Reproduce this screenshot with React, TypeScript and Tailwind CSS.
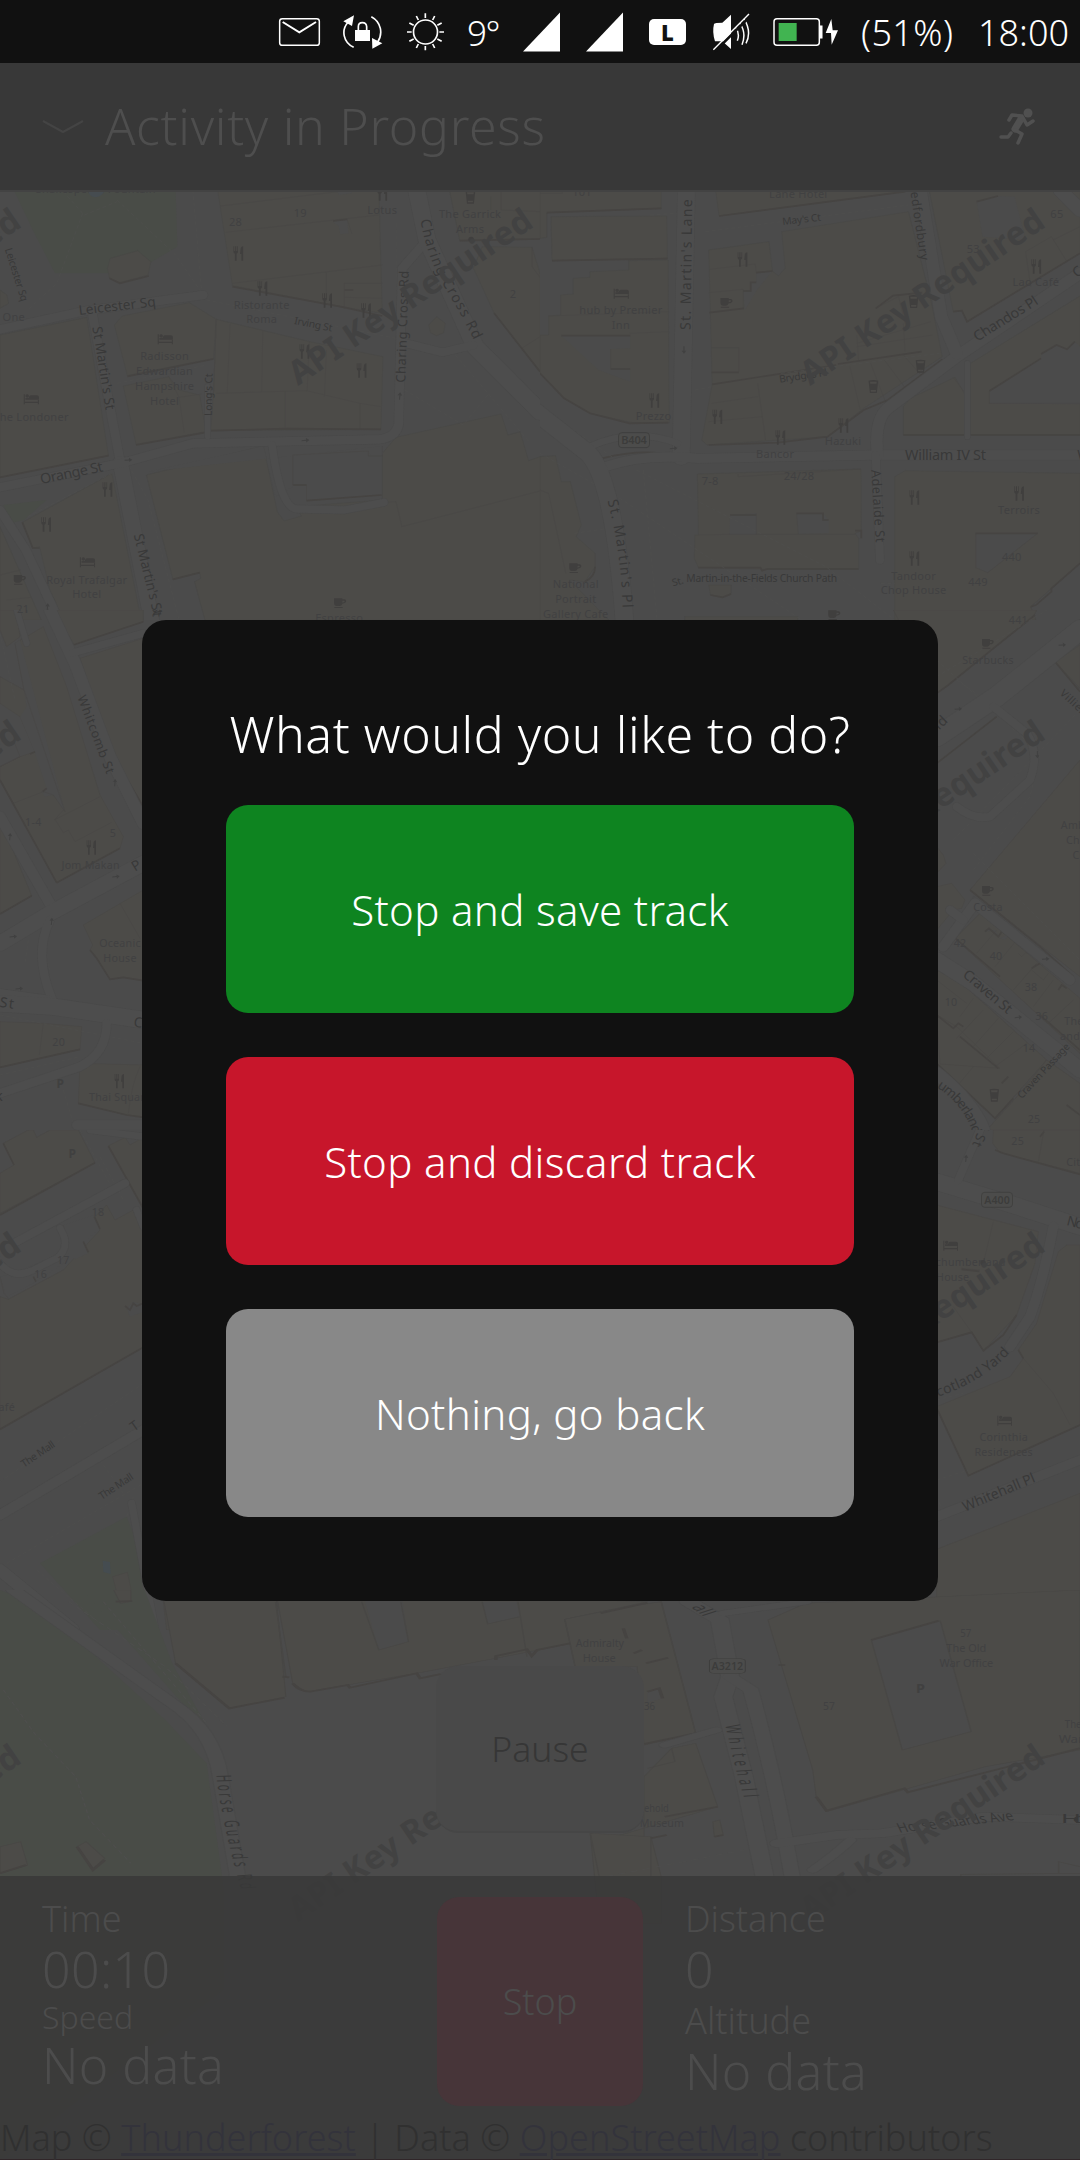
import React from "react";

type Street = [path: string, text: string, size: number, len: number];
type Poi = [x: number, y: number, ...lines: string[]];
type Mark = [kind: string, x: number, y: number];
type TileData = {
  id: string;
  x: number;
  y: number;
  w: number;
  h: number;
  vw: number;
  vh: number;
  parks?: string[];
  buildings: string[];
  yards?: string[];
  lines?: string;
  shadows?: string;
  dashes?: string;
  roads: [string, number][];
  streets: Street[];
  pois: Poi[];
  marks: Mark[];
  badges?: [number, number, number, string][];
};

const tiles: TileData[] = [
  {
    id: "nw", x: 0, y: 190, w: 540, h: 430, vw: 1568, vh: 1290,
    parks: ["40,0 510,0 515,170 400,240 330,250 160,250 100,130", "10,945 135,930 70,990 30,1000"],
    buildings: [
      "312,235 320,205 400,182 438,215 430,255 348,278 318,265",
      "632,0 1100,0 1110,370 1000,352 675,287",
      "332,405 355,378 550,338 628,388 620,505 370,557",
      "358,588 490,560 520,600 580,615 598,725 395,763",
      "628,388 900,455 1112,500 1106,718 612,722 620,610",
      "0,435 252,382 315,797 0,862",
      "1305,0 1568,0 1568,147 1335,152",
      "1375,235 1400,170 1545,172 1568,250 1568,545 1435,370",
      "425,855 765,768 805,965 825,993 875,978 860,950 1110,930 1110,790 1150,742 1455,672 1475,735 1510,725 1535,812 1568,800 1568,1290 595,1290 565,1175 583,1165 580,1148 502,1168",
      "65,997 325,850 410,1290 185,1290 145,1200 115,1070 95,1075",
      "0,1010 120,1290 0,1290",
      "1245,405 1268,380 1293,400 1288,428 1268,437 1250,428",
      "0,300 20,315 25,340 0,355",
    ],
    yards: ["975,0 1022,0 1022,10 985,15", "967,95 1008,88 1012,130 988,133 983,108", "430,845 765,768 800,920 850,890 850,795 1070,783 1080,798 1112,795 1112,768"],
    lines: "M640,48L1020,0M655,127L1100,75M1008,88L1022,132M675,280L1110,225M948,248V335M1000,357V280H1110M1000,322L1110,325M668,402L660,608M763,420L760,605M628,610L890,602 1045,640 1106,650M828,605V712M898,455L892,602M948,480L942,620M1045,640V715M490,560L520,622 585,612M520,622L535,728M628,388L620,610M850,795V885H890V930M850,795L1070,783V798H1110V768M1120,937L1150,935 1167,1010 1568,903M1545,172V230L1568,262M1515,475L1568,440M1425,20V60M1455,0V60L1568,65M0,1155L60,1140M20,1230L90,1222",
    shadows: "M675,290L1000,352 1110,378M370,559L620,507M395,765L598,727M612,722L830,716 1106,718M0,862L315,797M1335,152L1568,147M1435,370L1568,545M890,932L1108,915M502,1168L580,1148M318,265L348,280 432,258M967,93L1008,88M852,885H890M65,997L95,1074H115M1000,300H1026",
    dashes: "M240,70L165,280 80,360M240,70L180,0M340,30L510,195 600,330 1150,445M245,75L340,35M560,0L585,300M1150,100V420M1175,600L1345,705 1420,610M365,810L430,930 520,1290M1310,480L1540,760M80,980L325,850M340,580L600,525",
    roads: [["M0,418L250,362 590,315", 26], ["M268,370L350,820", 26], ["M350,820L440,1290", 44], ["M0,892L350,820 560,760 1100,748Q1160,740 1158,690L1168,235 1240,150", 26], ["M1210,0L1240,150 1380,470 1568,665", 50], ["M1180,460L1285,487 1375,465", 24], ["M790,765Q815,960 865,957L1000,960 1115,937", 22], ["M0,960L75,1080 170,1290", 26], ["M603,590V740", 16]],
    streets: [
      ["M230,375L455,348", "Leicester Sq", 40, 225],
      ["M268,412L308,665", "St Martin's St", 40, 252],
      ["M120,882L303,843", "Orange St", 42, 185],
      ["M388,1035L447,1280", "St Martin's St", 40, 250],
      ["M1177,578L1187,243", "Charing Cross Rd", 38, 335],
      ["M1220,90Q1245,215 1290,290T1382,462", "Charing Cross Rd", 42, 395],
      ["M853,402L962,424", "Irving St", 30, 112],
      ["M615,678L617,550", "Long's Ct", 30, 127],
      ["M14,178L62,335", "Leicester Sq", 30, 165],
    ],
    pois: [[278, 10, "Shakespeare Fountain"], [684, 108, "28"], [872, 80, "19"], [1110, 71, "Lotus"], [1365, 85, "The Garrick", "Arms"], [760, 356, "Ristorante", "Roma"], [478, 511, "Radisson", "Edwardian", "Hampshire", "Hotel"], [90, 692, "The Londoner"], [252, 1181, "Royal Trafalgar", "Hotel"], [40, 394, "One"], [1490, 323, "2"], [66, 1268, "21"], [985, 1296, "Espresso"]],
    marks: [["f", 1110, 10], ["f", 692, 190], ["f", 762, 295], ["f", 950, 331], ["f", 1063, 361], ["f", 884, 484], ["f", 1050, 541], ["f", 312, 898], ["f", 134, 1003], ["b", 480, 448], ["b", 91, 628], ["b", 254, 1117], ["c", 57, 1168], ["c", 987, 1238], ["g", 1366, 22], ["r", 373, 810], ["r", 887, 751], ["u", 1161, 618], ["u", 138, 1251], ["d", 1368, 148]],
  },
  {
    id: "ne", x: 540, y: 190, w: 540, h: 430, vw: 1568, vh: 1290,
    buildings: [
      "0,0 352,0 352,55 20,68 20,142 0,145",
      "32,80 368,78 370,205 35,212",
      "60,315 97,312 97,265 145,262 145,245 258,240 258,212 372,210 375,698 270,698 145,670 70,625 0,550 0,435 25,435 25,378 60,375",
      "510,0 1060,0 1060,5 520,78",
      "490,180 665,155 675,243 692,258 712,235 702,125 1070,65 1135,330 1168,500 940,655 835,740 485,765 470,750 500,583",
      "1130,0 1568,0 1568,190 1240,395 1225,362 1200,365",
      "1250,520 1568,318 1568,735 1250,735",
      "1055,735 1055,650 1075,625 1205,562 1233,612 1233,735",
      "1030,860 1060,842 1568,850 1568,1120 1425,1250 1440,1290 1030,1290",
      "457,852 932,837 933,1022 915,1030 925,1045 925,1137 640,1137 460,1133 448,1105 450,1035 460,1035",
      "0,800 45,797 62,875 88,875 120,1005 105,1040 160,1090 160,1130 130,1175 85,1170 200,1290 0,1290",
      "420,1290 420,1280 748,1280 748,1290",
      "490,1185 555,1185 555,1210 530,1222 495,1215",
    ],
    yards: ["62,437 262,437 262,475 205,477 205,535 262,537 262,575 170,540", "1305,603 1455,505 1455,492 1500,465 1530,478 1553,455 1568,470 1568,643 1305,640", "1268,35 1330,18 1378,20 1410,150 1285,140", "552,975 628,970 628,1033 550,1033", "745,970 822,970 838,990 838,1030 750,1032", "1265,1030 1445,1030 1300,1148 1267,1133", "628,250 675,243 630,300 595,360 590,305 612,300 612,277 628,275"],
    lines: "M492,238L625,222 628,250M490,308L590,298V355M25,378L375,365M260,430L375,425M498,473H577V545M498,640L632,620M490,695L645,680M632,580L655,750M920,460L1135,395M920,435L925,510M1055,400L1060,485M1040,315L1060,400M920,470L1140,435M900,530L930,660M960,520L1005,640M1000,510L1065,600M1055,495L1110,560M975,355L1040,320M628,970V1033M745,970L750,1032M550,1033H915M460,1035L550,1033M1410,185L1485,140 1530,215M1410,185L1425,290M1490,150L1568,110M1305,603V640H1568M0,900L25,910 75,1150M575,852V860L932,837M1265,1030V1133L1300,1148 1445,1030M205,477V535M0,10H65V0M1200,562L1235,610",
    shadows: "M20,68L352,55M35,212L370,206M62,437H262M205,537H262M0,550L70,625 145,670 260,700 372,698M520,78L1060,5M498,547H577M500,583L860,525M865,522L1108,485M490,765L690,758 835,740 940,660 1010,630 1168,508M1200,365L1225,362 1240,395 1568,190M1055,735H1233M1250,735H1568M1305,603L1455,505M1455,492L1500,465 1530,478 1553,455M552,975H628M745,970H822V990H838M460,1133H640L645,1142 660,1137H925M915,1022H933V1045M1265,1030H1445M1425,1250L1440,1245 1485,1205V1195L1568,1120M975,355L1025,317 1110,308M492,368L592,355M590,303H612V277H628M628,248L675,243M1268,35L1330,18M495,1215L530,1222 555,1212M180,805Q280,780 350,790M130,1175Q160,1160 160,1130",
    dashes: "M0,650L250,830M0,790L240,930 760,1290M280,840L830,1130 1030,1290M480,125L1070,45M450,600L500,590M700,550L1160,490M320,75L400,70M300,840L340,1290M100,1030L230,1010M990,1180H1030",
    roads: [["M425,0L410,800", 50], ["M190,830Q300,790 460,805L980,795 1568,795", 28], ["M145,770Q270,710 400,760", 20], ["M-20,660L140,790Q215,870 245,1290", 52], ["M980,795Q970,690 1010,655L1210,500 1568,250", 34], ["M1105,0L1165,380 1210,490", 36], ["M975,795L987,1110", 24], ["M1241,520V740", 16], ["M1510,0L1568,60", 40]],
    streets: [
      ["M437,420L442,28", "St. Martin's Lane", 42, 392],
      ["M196,932Q235,1080 240,1252", "St. Martin's Pl", 42, 325],
      ["M962,840L975,1058", "Adelaide St", 38, 218],
      ["M1060,811H1297", "William IV St", 42, 235],
      ["M1560,811H1600", "W", 42, 36],
      ["M1270,455L1450,340", "Chandos Pl", 42, 213],
      ["M1560,265L1590,240", "C", 42, 30],
      ["M705,105L817,92", "May's Ct", 30, 112],
      ["M696,578L835,557", "Brydges Pl", 30, 140],
      ["M1072,-18L1105,212", "Bedfordbury", 36, 232],
      ["M386,1189L420,1180", "St.", 30, 34],
      ["M425,1177H863", "Martin-in-the-Fields Church Path", 30, 438],
    ],
    pois: [[122, 18, "101"], [750, 24, "Lane Hotel"], [235, 373, "hub by Premier", "Inn"], [330, 689, "Prezzo"], [683, 803, "Bancor"], [880, 764, "Hazuki"], [752, 870, "24/28"], [494, 885, "7-8"], [1440, 289, "Lao Café"], [1501, 84, "65"], [1258, 188, "53"], [1391, 971, "Terroirs"], [1085, 1169, "Tandoor", "Chop House"], [1370, 1113, "440"], [1272, 1188, "449"], [104, 1194, "National", "Portrait", "Gallery Cafe"], [1390, 1296, "441"]],
    marks: [["b", 236, 311], ["f", 588, 208], ["c", 541, 337], ["f", 332, 631], ["f", 515, 680], ["f", 698, 742], ["f", 881, 706], ["g", 1085, 335], ["g", 1105, 529], ["g", 968, 590], ["f", 1441, 229], ["f", 1391, 910], ["f", 1087, 922], ["f", 1087, 1105], ["c", 102, 1133], ["c", 854, 1274], ["n", 418, 480], ["r", 388, 775]],
    badges: [[273, 751, 90, "B404"]],
  },
  {
    id: "w", x: 0, y: 610, w: 240, h: 520, vw: 720, vh: 1560,
    buildings: [
      "45,100 130,50 200,230 300,555 370,680 360,715 170,818 40,580 0,510 0,470 60,440 105,425 60,320 0,280 0,200 72,240",
      "160,0 430,0 430,35 222,104", "240,145 430,85 430,590 335,430", "0,0 50,0 60,80 20,110 0,60",
      "0,625 95,857 0,912", "250,945 430,840 430,1112 370,1102 330,1108 290,1045 270,1020 278,1005",
      "0,1235 130,1240 245,1250 240,1318 0,1372", "240,1360 430,1365 430,1520 380,1515 235,1480",
    ],
    yards: ["72,240 45,100 60,90 195,605 160,555 135,560 125,545 140,535 105,430 60,320 80,290"],
    lines: "M45,100L72,240 195,605M163,630L300,560M190,600L165,628 190,668 205,660 225,695 335,637M40,580L130,545 160,555 195,605M0,470L60,440M130,1240L118,1335M360,880L420,985M385,1510Q395,1420 420,1370M60,440L40,390",
    shadows: "M222,104L430,35M170,818L360,715M0,912L95,857M0,1372L240,1318M235,1480L380,1515 430,1522M335,430L430,590M270,1020L290,1045 330,1108 370,1102 430,1112M105,425L90,432M0,510L170,818M140,535L128,545",
    dashes: "M0,70L45,270M85,990L75,1060M130,1020L150,1080M0,1215L430,1300M190,1440L220,1540M0,1395L240,1340",
    roads: [["M150,0L225,160 330,440 430,640", 36], ["M215,130L430,70", 22], ["M0,620L155,890", 32], ["M0,1000L150,910 430,760", 46], ["M150,930Q100,1030 155,1165", 26], ["M0,1150L150,1170", 26], ["M0,1180L160,1190 430,1230", 50], ["M0,1450L240,1370Q320,1330 320,1240", 26], ["M50,0L80,100", 18], ["M230,1545H430", 28]],
    streets: [["M232,262L320,495", "Whitcomb St", 38, 248], ["M455,-45L458,24", "'s St", 38, 66], ["M405,785L430,770", "Pall Mall", 42, 180], ["M-2,1190L40,1196", "St", 42, 42], ["M400,1250L500,1262", "Cockspur", 42, 180], ["M-14,1472H10", "k", 42, 22]],
    pois: [[70, 10, "21"], [272, 776, "Jom Makan"], [100, 649, "1-4"], [339, 682, "5"], [360, 1010, "Oceanic", "House"], [176, 1307, "20"], [360, 1474, "Thai Square"]],
    marks: [["f", 274, 712], ["f", 358, 1413], ["r", 348, 800], ["r", 40, 980], ["u", 155, 934], ["r", 58, 1136], ["u", 30, 680], ["u", 345, 518], ["P", 181, 1421]],
  },
  {
    id: "sw", x: 0, y: 1130, w: 240, h: 500, vw: 720, vh: 1500,
    parks: ["120,1300 380,1160 430,1290 460,1500 300,1500", "0,1400 120,1500 0,1500", "60,1500 0,1430 0,1500"],
    buildings: [
      "10,40 85,0 100,0 110,22 150,0 235,0 285,98 0,250 0,130 42,105",
      "325,48 375,22 390,45 430,22 430,240", "0,500 25,508 190,420 300,300 285,260 320,225 345,270 400,240 430,280 430,652 0,900",
      "338,1340 382,1327 400,1410 360,1425", "490,1415 720,1415 720,1500 500,1500",
    ],
    yards: ["190,285 280,255 300,297 250,335 265,370 225,388 205,370 190,400 100,460 20,500 0,440 40,430 180,370", "380,535 400,515 430,525 430,545 390,560"],
    lines: "M190,285L205,340 180,375 35,440M0,440L12,490 25,505M400,240L430,300",
    shadows: "M0,255L285,98M10,40L42,105M325,48L430,235M0,898L430,652M300,297L283,260M265,367L250,335M375,528L390,540 400,520 410,528 430,520M360,1422L400,1408M100,440L108,455",
    dashes: "M0,1055L430,760M20,1300L430,1060M300,80L370,210M240,0L340,180M110,1320L300,1480M380,1160L400,1100M300,990L370,1090",
    roads: [["M50,335L375,160", 24], ["M0,400Q40,450 100,420L170,385Q215,350 180,295", 20], ["M0,1155L430,900", 30], ["M0,1320L220,1500", 36], ["M410,240L430,290", 20], ["M270,0L430,20", 20], ["M395,1120L465,1500", 22]],
    streets: [["M72,1013L168,948", "The Mall", 31, 115], ["M305,1110L403,1045", "The Mall", 31, 117], ["M402,905L430,885", "The Mall", 40, 160]],
    pois: [[294, 258, "18"], [190, 403, "17"], [122, 444, "16"], [10, 843, "Café"]],
    marks: [["P", 217, 70]],
  },
  {
    id: "e", x: 840, y: 610, w: 240, h: 520, vw: 720, vh: 1560,
    buildings: [
      "160,0 590,0 580,20 325,225 290,250", "645,155 720,105 720,235", "290,790 318,760 310,735 290,710", "290,830 335,820 375,870 365,895 340,900 290,960",
      "390,840 720,450 720,1100", "345,985 420,910 480,960 720,1165 720,1330", "290,1080 365,1120 620,1350 465,1525 290,1360", "290,1225 300,1220 350,1250 480,1375 300,1362",
      "440,1560 540,1450 620,1350 720,1420 720,1560",
    ],
    yards: ["435,965 445,955 480,985 510,970 495,990 480,985 465,960"],
    lines: "M465,1070L530,990M410,1030L470,960M520,1140L590,1060M580,1190L640,1110M625,1240L700,1170M360,1220L400,1165M350,1285L430,1200M400,1310L475,1225M440,1345L520,1265M465,1370L560,1300M350,1430L400,1370M290,1110L380,1180M575,1080L610,1110 625,1090M535,1030L545,1040 560,1025",
    shadows: "M325,225L460,115 585,15M290,250L325,225M645,155L720,245M390,840L600,1010 700,1100M435,965L447,955 475,980 485,965M340,980L480,1100M600,1215L720,1320M290,1215L340,1255 355,1240 370,1250M360,1280L475,1375M290,1360L465,1525 520,1465M575,1075L600,1060M655,1140L665,1125 680,1135M290,460L470,320M430,265L720,30M485,1420L505,1400M680,1485L720,1515",
    dashes: "M290,150L600,430 570,560 400,780M340,690L720,300M350,210L480,300M400,730L720,1050M480,300L600,400M290,200L720,-60",
    roads: [["M290,380L470,260 720,60", 60], ["M460,290L560,370Q600,430 570,510L450,620Q400,630 350,590", 24], ["M310,1010L405,880 690,1110", 30], ["M290,1050L400,1120 720,1380", 46], ["M290,1390Q400,1480 430,1560", 40], ["M330,900L370,930", 26]],
    streets: [["M268,390L330,330", "and", 42, 80], ["M658,252L725,315", "Villiers St", 32, 150], ["M366,1098L504,1215", "Craven St", 42, 178], ["M545,1468L692,1310", "Craven Passage", 30, 214], ["M290,1432Q380,1490 402,1585", "umberland St", 40, 220]],
    pois: [[535, 41, "441"], [444, 163, "Starbucks"], [444, 904, "Costa"], [708, 658, "Amba", "Cha", "C"], [360, 1010, "42"], [468, 1050, "40"], [573, 1142, "38"], [605, 1230, "36"], [333, 1189, "10"], [567, 1325, "14"], [702, 1246, "The"], [690, 1290, "and"], [582, 1538, "25"]],
    marks: [["c", 443, 100], ["c", 443, 841], ["g", 463, 1456], ["r", 355, 297], ["r", 667, 105], ["n", 592, 434], ["r", 535, 1222], ["r", 617, 1047]],
  },
  {
    id: "se", x: 840, y: 1130, w: 240, h: 500, vw: 720, vh: 1500,
    buildings: [
      "460,0 720,0 720,130 480,68 458,40", "290,225 595,305 585,400 530,555 430,662 395,607 290,637", "655,365 680,345 720,345 720,885 385,1037 290,830 510,740 550,685 535,660 590,580", "290,1258 720,1090 720,1500 290,1500",
    ],
    yards: ["180,1500 295,1470 305,1500"],
    lines: "M460,275L430,400M365,415L420,420M550,685L640,790 690,885M612,0L595,95M340,530L395,607",
    shadows: "M465,60L490,70 720,133M290,637L395,607 430,662 490,615 530,555M290,835L385,1037 720,885M365,418L418,424M535,660L550,685M600,20L612,5M180,1500L295,1470",
    dashes: "M290,1050L385,1020M290,1100L310,1145M290,810L370,790",
    roads: [["M290,155L520,225 720,290", 50], ["M640,290Q610,450 570,560L510,650", 30], ["M355,150L420,0", 24], ["M290,1160L720,990", 28]],
    streets: [["M427,-30L392,55", "d St", 40, 80], ["M678,285L730,298", "No", 42, 52], ["M294,800Q430,755 512,665", "cotland Yard", 42, 255], ["M375,1145L590,1054", "Whitehall Pl", 42, 232]],
    pois: [[533, 45, "25"], [700, 108, "Cit"], [392, 409, "chumberland"], [338, 453, "House"], [491, 934, "Corinthia", "Residences"]],
    marks: [["b", 332, 347], ["b", 494, 872], ["u", 378, 85], ["d", 429, 398]],
    badges: [[471, 210, 93, "A400"]],
  },
  {
    id: "s", x: 0, y: 1590, w: 1080, h: 570, vw: 1568, vh: 1710,
    parks: ["0,0 60,50 240,390 300,520 325,900 325,1200 0,1710", "120,0 210,0 250,220 300,410 290,400"],
    buildings: [
      "235,0 400,0 415,320 333,355 255,220", "400,0 940,35 820,88 830,160 720,205 605,250 445,305 425,280", "820,88 910,50 960,35 1010,430 935,465 925,230 835,230",
      "1115,90 1170,40 1568,0 1568,480 1430,530 1200,665 1185,620 1180,540", "935,560 975,475 1010,460 1042,650 860,760 935,740", "857,730 945,740 960,860 960,1000 870,1000", "1035,695 1045,690 1050,735 1037,740",
      "0,770 30,755 40,825 0,850", "112,770 125,755 152,805 135,835", "165,0 190,0 190,35 175,40",
    ],
    yards: ["1265,150 1365,92 1410,425 1310,480", "525,0 582,0 593,155 550,180", "700,35 750,35 755,80 708,102", "940,305 955,295 962,325 940,338"],
    lines: "M400,35L415,260M752,35L765,200M820,88L835,230M525,35L550,180 593,155 582,35M700,35L708,102 755,80M1265,150L1310,480 1410,425 1365,92M975,475L980,515 940,535M960,35L1010,430M945,740V860M857,730L870,860M1537,850V815L1568,830M1395,860V853L1568,850",
    shadows: "M255,220L333,355 413,323M410,260L420,262M425,280Q435,305 450,305L505,285 508,293 605,250 610,265 640,252M720,210V198L765,178 772,198 780,180 828,160M872,70L940,38M1265,150L1363,92M1130,225H1140M1185,620L1200,662 1313,595 1318,607 1568,475M935,462L1010,430M965,680L1042,650M905,115L910,145M920,190L932,180M938,220L970,203M1037,740L1050,735M0,850L38,825M112,770L135,840 152,810M168,35L192,33M940,305L957,295 962,325M945,745L968,735",
    dashes: "M5,300L50,430 110,560 130,690 190,820M100,35L240,230 330,410M150,35L300,400M880,860L1080,780",
    roads: [["M20,0L250,340Q310,420 320,560L345,860", 22], ["M1000,35L1045,90 1060,260 1050,320 1080,560 1110,860", 26], ["M1060,260L1090,300Q1125,560 1150,860", 22], ["M1040,420L965,465", 16], ["M1130,760L1215,735 1280,730 1430,680 1568,690", 24], ["M1180,840Q1215,790 1235,750", 16], ["M1170,35L1050,70", 16]],
    streets: [["M314,555Q322,700 350,900", "Horse Guards Rd", 30, 345], ["M1053,405Q1065,520 1080,622", "Whitehall", 30, 219], ["M1540,700H1600", "Horse", 40, 60], ["M1003,52L1022,80", "all", 32, 34]],
    pois: [],
    marks: [["P2", 1336, 295]],
  },
];

/* Narrow labels of the southern tile: x, y, width, text. */
const southLabels: [number, number, number, string][] = [
  [836, 170, 70, "Admiralty"], [846, 215, 48, "House"], [1394, 142, 16, "57"], [1374, 186, 58, "The Old"], [1364, 230, 78, "War Office"],
  [1195, 360, 17, "57"], [935, 361, 16, "36"], [935, 665, 36, "ehold"], [929, 710, 64, "Museum"], [1546, 415, 24, "The"], [1537, 460, 36, "War"],
];

function MarkIcon({ kind, x, y }: { kind: string; x: number; y: number }) {
  const t = `translate(${x} ${y})`;
  const c = "#403f3e";
  switch (kind) {
    case "f":
      return <path transform={t} fill={c} d="M-14,-21h2v14h3v-14h3v14h3v-14h2v17q0,4 -4,5v21h-5v-21q-4,-1 -4,-5zM7,-16q2,-5 7,-5v43h-5v-20h-4z" />;
    case "b":
      return <path transform={t} fill={c} d="M-22,-15h3v22h38v-5h3v13h-3v-4h-38v4h-3zM-17,1v-5h9q2,-7 6,-8h18q6,0 6,5v8zM-12,-15a5,5 0 1 1 -.1,0z" />;
    case "c":
      return <path transform={t} fill={c} fillRule="evenodd" d="M-17,-13h24v3h6q5,0 5,5q0,7 -11,8q-2,7 -8,7h-8q-8,0 -8,-9zM7,-6v6q7,-1 7,-4q0,-2 -3,-2zM-16,13h24v3h-24z" />;
    case "g":
      return <path transform={t} fill={c} fillRule="evenodd" d="M-14,-18q14,-4 28,0l-4,37h-20zM-10,-15l1,6h18l1,-6zM-8,10l1,5h14l1,-5z" />;
    case "d":
      return <circle cx={x} cy={y} r="8" fill={c} />;
    case "P":
      return <text x={x} y={y + 13} textAnchor="middle" fontSize="36" fontWeight="700" fill="#404040">P</text>;
    case "P2":
      return <text x={x - 6} y={y + 13} fontSize="36" fontWeight="700" textLength="13" lengthAdjust="spacingAndGlyphs" fill="#404040">P</text>;
    default: {
      const a = kind === "u" ? -85 : kind === "n" ? 90 : -5;
      return <path transform={`${t} rotate(${a})`} fill="#414141" d="M-11,-1.5h13v-5l9,6.5l-9,6.5v-5h-13z" />;
    }
  }
}

function Tile({ t }: { t: TileData }) {
  return (
    <svg x={t.x} y={t.y} width={t.w} height={t.h} viewBox={`0 0 ${t.vw} ${t.vh}`} preserveAspectRatio="none">
      {t.parks?.map((p, i) => <polygon key={i} points={p} fill="#494c47" />)}
      {t.buildings.map((p, i) => <polygon key={i} points={p} fill="#4c4b48" stroke="#484745" strokeWidth="1.5" />)}
      {t.yards?.map((p, i) => <polygon key={i} points={p} fill="#4b4b4b" />)}
      <path d={t.lines} fill="none" stroke="#484745" strokeWidth="2" />
      <path d={t.shadows} fill="none" stroke="#464442" strokeWidth="5" />
      <path d={t.dashes} fill="none" stroke="#4e4e4d" strokeWidth="2" strokeDasharray="11 8" />
      {t.roads.map(([d, w], i) => <path key={i} d={d} fill="none" stroke="#494949" strokeWidth={w + 3} strokeLinecap="round" />)}
      {t.roads.map(([d, w], i) => <path key={i} d={d} fill="none" stroke="#4d4d4d" strokeWidth={w} strokeLinecap="round" strokeLinejoin="round" />)}
      {t.marks.map(([k, x, y], i) => <MarkIcon key={i} kind={k} x={x} y={y} />)}
      {t.pois.map(([x, y, ...ls], i) =>
        ls.map((l, j) => (
          <text key={`${i}-${j}`} x={x} y={y + j * 44.5} textAnchor="middle" fontSize="32" fontWeight="400" letterSpacing="0.8" fill="#414142">{l}</text>
        )),
      )}
      {t.streets.map(([d, text, size, len], i) => (
        <React.Fragment key={i}>
          <path id={`${t.id}${i}`} d={d} fill="none" />
          <text fontSize={size} fontWeight="400" fill="#393939" textLength={len}>
            <textPath href={`#${t.id}${i}`} textLength={len}>{text}</textPath>
          </text>
        </React.Fragment>
      ))}
      {t.badges?.map(([x, y, w, text], i) => (
        <g key={i}>
          <rect x={x - w / 2} y={y - 23} width={w} height={45} rx="10" fill="#4c4c4b" stroke="#3e3e3d" strokeWidth="2.5" />
          <text x={x - w / 2 + 8} y={y + 12} fontSize="32" fontWeight="600" textLength={w - 16} fill="#3c3c3b">{text}</text>
        </g>
      ))}
      {t.id === "s" && (
        <g fill="#414142" fontWeight="400">
          {southLabels.map(([x, y, w, text], i) => (
            <text key={i} x={x} y={y} fontSize="31" textLength={w} lengthAdjust="spacingAndGlyphs">{text}</text>
          ))}
          <rect x="1030" y="206" width="52" height="44" rx="7" fill="#4c4c4b" stroke="#3e3e3d" strokeWidth="1.5" />
          <text x="1033" y="240" fontSize="32" fontWeight="600" textLength="46" lengthAdjust="spacingAndGlyphs" fill="#3c3c3b">A3212</text>
          <text transform="translate(1306 728) rotate(-13)" fontSize="40" textLength="172" lengthAdjust="spacingAndGlyphs" fill="#393939">Horse Guards Ave</text>
        </g>
      )}
      {t.id === "sw" && <path d="M308,1292l22,4 2,36 -22,-6z" fill="#454c50" />}
      {t.id === "nw" && <path d="M255,0h50q-10,22 -28,22q-18,0 -22,-22z" fill="#464c50" />}
    </svg>
  );
}

function MapView() {
  return (
    <svg className="absolute inset-0" width="1080" height="2160" viewBox="0 0 1080 2160" fontFamily="'Noto Sans','Open Sans',sans-serif">
      <rect width="1080" height="2160" fill="#4b4b4b" />
      {tiles.map((t) => <Tile key={t.id} t={t} />)}
      {[386, 898, 1410, 1922].map((y) =>
        [-214, 298, 810].map((x) => (
          <text key={`${x}-${y}`} transform={`translate(${x} ${y}) rotate(-34)`} fontSize="33" fontWeight="700" textLength="286" fill="#424242">API Key Required</text>
        )),
      )}
    </svg>
  );
}

function StatusBar() {
  return (
    <div className="relative flex h-[63px] items-center bg-[#111111] pl-[277px] text-[36px] leading-none font-light text-white">
      <svg className="mr-5 shrink-0" width="45" height="63" viewBox="51 0 135 189" fill="none" stroke="#fff">
        <rect x="59" y="56" width="119" height="80" rx="8" strokeWidth="4.5" />
        <path d="M68,66L118,97 168,66" strokeWidth="6" />
      </svg>
      <svg className="mr-[22px] shrink-0" width="42" height="63" viewBox="246 0 126 189" fill="none" stroke="#fff" strokeWidth="5">
        <path d="M281,142C250,128 242,90 265,66M334,50C364,66 370,102 352,128" />
        <path d="M250,64L282,46 276,78zM336,114L367,130 337,146z" fill="#fff" stroke="none" />
        <path d="M285,90H330V123H285z" fill="#fff" stroke="none" />
        <path d="M295,90V80Q295,68 307,68T320,80V90" strokeWidth="5" />
      </svg>
      <svg className="mr-[22px] shrink-0" width="39" height="63" viewBox="438 0 117 189" fill="none" stroke="#fff" strokeWidth="5">
        <circle cx="496.500" cy="96" r="36" />
        <path d="M552,96L538,96M545,124L532,117M524,144L518,132M496,151L496,138M469,144L475,132M448,124L461,117M441,96L455,96M448,69L461,76M469,48L475,60M496,40L496,54M524,48L518,60M545,69L532,76" />
      </svg>
      <span className="mr-[23px] w-[33px] pt-0.5 text-[35px] tracking-[-1.5px] whitespace-nowrap">9°</span>
      <svg className="mr-[26px] shrink-0" width="37" height="63" viewBox="0 0 37 63"><path d="M37,12.500V51.500H0z" fill="#fff" /></svg>
      <svg className="mr-[26px] shrink-0" width="37" height="63" viewBox="0 0 37 63"><path d="M37,12.500V51.500H0z" fill="#fff" /></svg>
      <span className="mr-[26px] flex h-[26px] w-[37px] shrink-0 items-center justify-center rounded-[5px] bg-white font-['Open_Sans',sans-serif] text-[22px] font-extrabold text-[#111]">L</span>
      <svg className="mr-[23px] shrink-0" width="38" height="63" viewBox="156 0 114 189" fill="none" stroke="#fff" strokeWidth="5">
        <path d="M162,72Q164,68 187,68L213,44V147L187,124H165Q156,96 162,72z" fill="#fff" stroke="none" />
        <path d="M228,84Q240,102 232,122M240,70Q260,100 246,134M252,56Q276,96 258,130" strokeWidth="4.500" />
        <path d="M165,154L272,47" stroke="#111" strokeWidth="8" />
        <path d="M160,149L267,42" strokeWidth="4" />
      </svg>
      <svg className="mr-[22px] shrink-0" width="66" height="63" viewBox="340 0 198 189" fill="none" stroke="#fff">
        <rect x="343" y="56" width="136" height="80" rx="9" strokeWidth="4.5" />
        <rect x="357" y="69" width="54" height="54" fill="#41b451" stroke="none" />
        <path d="M481,77H488V115H481z" fill="#fff" />
        <path d="M515,57L498,99H514L516,134L535,91H519z" fill="#fff" stroke="none" />
      </svg>
      <span className="w-[117px] pt-0.5 whitespace-nowrap tracking-[0.4px]">(51%)</span>
      <span className="pt-0.5 whitespace-nowrap">18:00</span>
    </div>
  );
}

function Stat({ label, value, small, tall }: { label: string; value: string; small?: boolean; tall?: boolean }) {
  return (
    <div className="flex flex-col whitespace-nowrap">
      <span className={small ? "h-[40px] text-[32px] leading-[40px]" : "h-[44px] text-[36px] leading-[44px]"}>{label}</span>
      <span className={tall ? "h-[58px] text-[50px] leading-[56px] tracking-[0.4px]" : "h-[56px] text-[50px] leading-[56px] tracking-[0.4px]"}>{value}</span>
    </div>
  );
}

const actions = [
  { label: "Stop and save track", cls: "bg-[#0e8420]" },
  { label: "Stop and discard track", cls: "bg-[#c7162b]" },
  { label: "Nothing, go back", cls: "bg-[#888888]" },
];

export default function App() {
  return (
    <div className="relative flex h-[2160px] w-[1080px] flex-col overflow-hidden bg-[#4b4b4b] font-['Noto_Sans','Open_Sans',sans-serif] font-light">
      <MapView />
      <StatusBar />
      <header className="relative flex h-[129px] shrink-0 items-center border-b-2 border-[#434343] bg-[#383838] px-[42px] text-[#4e4e4e]">
        <svg width="42" height="16" viewBox="0 0 42 16" fill="none" stroke="#444444" strokeWidth="2"><path d="M1,2L21,13 41,2" /></svg>
        <h1 className="ml-[21px] pb-0.5 text-[50px] leading-none font-light tracking-[0.7px] whitespace-nowrap">Activity in Progress</h1>
        <svg className="ml-auto" width="40" height="38" viewBox="0 0 40 38" fill="none" stroke="#505050" strokeWidth="5" strokeLinecap="round" strokeLinejoin="round">
          <circle cx="30" cy="5" r="4.500" fill="#505050" stroke="none" />
          <path d="M23,11L17,21" strokeWidth="7" />
          <path d="M11,12L14,7 24,8 29,17 35,13M17,22L24,26 20,35M13,25L10,29 3,29" strokeWidth="3.500" />
        </svg>
      </header>
      <main className="relative flex flex-1 flex-col items-center justify-end pb-[43px]">
        <button className="h-[167px] w-[208px] rounded-[22px] border-b-2 border-[#464646] bg-[#494949] text-[35.5px] font-light text-[#363636]">Pause</button>
      </main>
      <footer className="relative flex h-[284px] shrink-0 flex-col bg-[#383838]/85 text-[#4c4c4c]">
        <div className="flex h-[244px] pt-[21px]">
          <div className="flex w-[437px] flex-col pl-[42px]">
            <Stat label="Time" value="00:10" />
            <Stat label="Speed" value="No data" small />
          </div>
          <button className="h-[209px] w-[206px] rounded-[22px] bg-[#473539] text-[36px] font-light">Stop</button>
          <div className="flex flex-col pl-[42px]">
            <Stat label="Distance" value="0" tall />
            <Stat label="Altitude" value="No data" />
          </div>
        </div>
        <p className="h-10 border-b border-[#302629] text-[36px] leading-[36px] tracking-[0.05px] whitespace-nowrap text-[#303030]">
          Map © <span className="text-[#33333b] underline">Thunderforest</span> | Data © <span className="text-[#33333b] underline">OpenStreetMap</span> contributors
        </p>
      </footer>
      <section className="absolute top-[620px] left-[142px] flex h-[981px] w-[796px] flex-col items-center gap-11 rounded-[24px] bg-[#111111] px-[84px] pt-[84px] text-white">
        <h2 className="flex h-[57px] items-center pt-0.5 text-[50px] leading-none font-light tracking-[0.55px] whitespace-nowrap">What would you like to do?</h2>
        {actions.map((a) => (
          <button key={a.label} className={`h-[208px] w-full shrink-0 rounded-[22px] pt-0.5 text-[42px] leading-none font-light tracking-[0.35px] whitespace-nowrap ${a.cls}`}>{a.label}</button>
        ))}
      </section>
    </div>
  );
}
